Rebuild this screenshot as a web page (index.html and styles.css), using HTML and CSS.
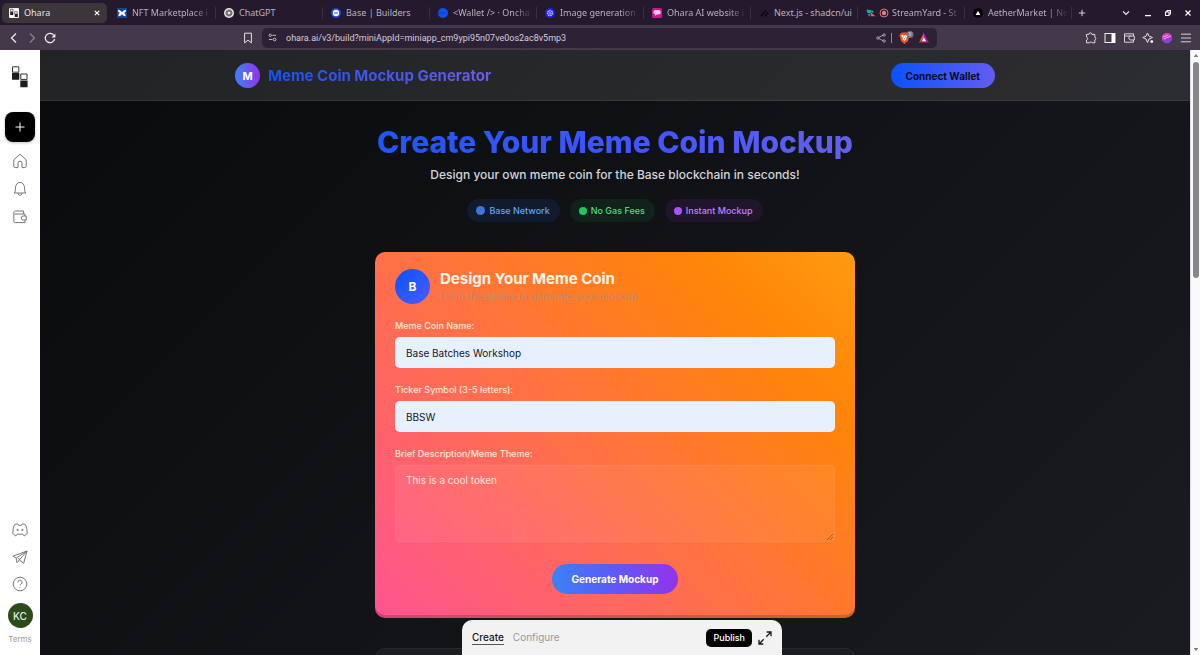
FILE: index.html
```html
<!DOCTYPE html>
<html lang="en">
<head>
<meta charset="utf-8">
<meta name="viewport" content="width=device-width, initial-scale=1">
<title>Ohara</title>
<link rel="stylesheet" href="styles.css">
</head>
<body>
<div class="browser">
  <div class="tabs">
    <div class="tab tab-active">
      <svg class="fav" viewBox="0 0 10 10"><rect width="10" height="10" rx="1" fill="#f4f4f4"/><path d="M1.2 3.8h3V7h-3zM5.8 6h3v3h-3z" fill="#222"/><path d="M1.6 1.2h2.4v2.4H1.6zM5.6 3.6h2.6V6H5.6z" fill="#fff" stroke="#333" stroke-width=".6"/></svg>
      <span class="tab-name">Ohara</span>
      <button class="tab-close" aria-label="Close tab"><svg viewBox="0 0 6 6"><path d="M.8.8l4.400 4.400M5.200.8L.8 5.200" stroke="#fff" stroke-width="1.200"/></svg></button>
    </div>
    <div class="tab tab-faded">
      <svg class="fav" viewBox="0 0 10 10"><rect width="10" height="10" fill="#124596"/><path d="M1 2c2 0 2.500.6 4 2.200C6.500 2.600 7 2 9 2c0 2-.8 2.300-2 3 1.200.7 1.700 1.600 1.500 3.200C6.800 8.200 6 7.500 5 6.200 4 7.500 3.200 8.200 1.500 8.200 1.300 6.600 1.800 5.700 3 5 1.800 4.300 1 4 1 2z" fill="#fff"/></svg>
      <span class="tab-name">NFT Marketplace i</span>
    </div>
    <div class="tab">
      <svg class="fav" viewBox="0 0 10 10"><circle cx="5" cy="5" r="5" fill="#e4e4e4"/><g fill="none" stroke="#444" stroke-width=".6"><ellipse cx="5" cy="5" rx="3.400" ry="1.900"/><ellipse cx="5" cy="5" rx="3.400" ry="1.900" transform="rotate(60 5 5)"/><ellipse cx="5" cy="5" rx="3.400" ry="1.900" transform="rotate(120 5 5)"/></g></svg>
      <span class="tab-name">ChatGPT</span>
    </div>
    <div class="tab">
      <svg class="fav" viewBox="0 0 10 10"><circle cx="5" cy="5" r="5" fill="#1248e8"/><circle cx="5" cy="5" r="3.200" fill="#fff"/><path d="M3 5h4" stroke="#1248e8" stroke-width="1"/></svg>
      <span class="tab-name">Base | Builders</span>
    </div>
    <div class="tab tab-faded">
      <svg class="fav" viewBox="0 0 10 10"><circle cx="5" cy="5" r="5" fill="#0a52f5"/><path d="M.5 5h7" stroke="#123a9c" stroke-width=".8"/></svg>
      <span class="tab-name">&lt;Wallet /&gt; · Oncha</span>
    </div>
    <div class="tab tab-faded">
      <svg class="fav" viewBox="0 0 10 10"><circle cx="5" cy="5" r="5" fill="#1f1fe0"/><circle cx="5" cy="5" r="2.400" fill="none" stroke="#b9b6ff" stroke-width="1.600" stroke-dasharray="1.400 .5"/><circle cx="5" cy="5" r=".8" fill="#fff"/></svg>
      <span class="tab-name">Image generation</span>
    </div>
    <div class="tab tab-faded">
      <svg class="fav" viewBox="0 0 10 10"><rect width="10" height="10" rx="1.500" fill="#c9168c"/><path d="M3.500 2h3a2 2 0 0 1 0 4.600H5L3 8V6.500A2.300 2.300 0 0 1 3.500 2z" fill="#ffc4ee"/></svg>
      <span class="tab-name">Ohara AI website i</span>
    </div>
    <div class="tab">
      <svg class="fav" viewBox="0 0 10 10"><path d="M2 8l5-5.500M5.500 8.500L9 4.500" stroke="#09050c" stroke-width="1.200"/></svg>
      <span class="tab-name">Next.js - shadcn/ui</span>
    </div>
    <div class="tab tab-faded">
      <svg class="fav" viewBox="0 0 10 10"><path d="M.5 1.500l4.500.8v3.200L1.500 5z" fill="#18b394"/><path d="M5 4.500l4.500 3.700H4.800z" fill="#e8623c"/><path d="M1.500 6l1.800 2.800 1.400-2.600z" fill="#3a82e8"/><path d="M5.500 1.800l2.500 2.400-2.600.2z" fill="#3fc4a7"/></svg>
      <svg class="fav fav-rec" viewBox="0 0 10 10"><circle cx="5" cy="5" r="4" fill="none" stroke="#e88080" stroke-width=".9"/><circle cx="5" cy="5" r="2.200" fill="#ee7777"/></svg>
      <span class="tab-name">StreamYard - St</span>
    </div>
    <div class="tab tab-faded">
      <svg class="fav" viewBox="0 0 10 10"><circle cx="5" cy="5" r="5" fill="#000"/><path d="M5 2.800L7.400 7H2.600z" fill="#fff"/></svg>
      <span class="tab-name">AetherMarket | Ne</span>
    </div>
    <button class="new-tab" aria-label="New tab"><svg viewBox="0 0 8 8"><path d="M4 .8v6.400M.8 4h6.400" stroke="#d8d2dc" stroke-width="1"/></svg></button>
    <div class="window-buttons">
      <button aria-label="Search tabs"><svg viewBox="0 0 8 8"><path d="M1 2.400L4 5.400l3-3" fill="none" stroke="#eee" stroke-width="1.200"/></svg></button>
      <button aria-label="Minimize"><svg viewBox="0 0 8 8"><path d="M1 6.600h6" stroke="#fff" stroke-width="1.300"/></svg></button>
      <button aria-label="Restore"><svg viewBox="0 0 8 8"><path d="M1.500 3h3.500v3.500H1.500zM3 2.800V1.500h3.500V5H5" fill="none" stroke="#fff" stroke-width="1.100"/></svg></button>
      <button aria-label="Close"><svg viewBox="0 0 8 8"><path d="M1.500 1.500l5 5M6.500 1.500l-5 5" stroke="#fff" stroke-width="1.300"/></svg></button>
    </div>
  </div>

  <div class="toolbar">
    <div class="nav-buttons">
      <button aria-label="Back"><svg viewBox="0 0 12 12"><path d="M8 1.500L3.500 6 8 10.500" fill="none" stroke="#f2eff4" stroke-width="1.200"/></svg></button>
      <button aria-label="Forward"><svg viewBox="0 0 12 12"><path d="M4 1.500L8.500 6 4 10.500" fill="none" stroke="#8d8494" stroke-width="1.200"/></svg></button>
      <button aria-label="Reload"><svg viewBox="0 0 12 12"><path d="M10 3.500A4.700 4.700 0 1 0 10.600 7" fill="none" stroke="#f2eff4" stroke-width="1.200"/><path d="M7.600 5.400h3.800V1.600z" fill="#f2eff4"/></svg></button>
    </div>
    <button class="bookmark" aria-label="Bookmark"><svg viewBox="0 0 12 12"><path d="M2.600 1.200h6.800v9.600L6 8.200l-3.400 2.600z" fill="none" stroke="#e4e0e8" stroke-width="1"/></svg></button>
    <div class="address">
      <svg class="site-info" viewBox="0 0 10 10" fill="none" stroke="#cfc9d3" stroke-width="1"><circle cx="2.500" cy="2.600" r="1.300"/><path d="M4.800 2.600H9M1 7.200h4"/><circle cx="7.300" cy="7.200" r="1.500"/></svg>
      <input class="url" type="text" aria-label="Address" value="ohara.ai/v3/build?miniAppId=miniapp_cm9ypi95n07ve0os2ac8v5mp3">
      <svg class="share" viewBox="0 0 10 10" fill="none" stroke="#bdb6c2" stroke-width=".8"><path d="M2.800 4.400l4.400-2.200M2.800 5.400l4.400 2.400"/><circle cx="1.900" cy="5" r="1.200"/><circle cx="8.100" cy="2" r="1.200"/><circle cx="8.100" cy="8" r="1.200"/></svg>
      <span class="divider"></span>
      <svg class="shield" viewBox="0 0 16 14"><path d="M2.500 2.500L4 1.500h5l1.500 1 1 2-1.500 5.500-3.500 3-3.500-3L1.500 4.500z" fill="#f0501e"/><path d="M3.800 4l2.700.6L9.200 4l.6 1-1.600 1.700.3 1.600-2 1.600-2-1.600.3-1.600L3.200 5z" fill="#fff"/><path d="M5 5.600l1 .5M8 5.600l-1 .5M6.500 7v1.500" stroke="#f0501e" stroke-width=".8"/><circle cx="12" cy="3.600" r="3.500" fill="#77717e"/><text x="12" y="5.400" text-anchor="middle" class="badge-text">8</text></svg>
      <svg class="rewards" viewBox="0 0 10 10"><path d="M5 0L2.500 4.500 0 9.500 5 6z" fill="#ff5a1f"/><path d="M5 0l5 9.500L5 6z" fill="#9b1ab0"/><path d="M0 9.500L5 6l5 3.500z" fill="#d91f6b"/><path d="M5 4.500l2.200 3.700H2.800z" fill="#fff"/></svg>
    </div>
    <div class="extensions">
      <button aria-label="Extensions"><svg viewBox="0 0 12 12"><path d="M1.400 2.400h2.400a1.500 1.500 0 0 1 3 0h3v2.800a1.400 1.400 0 0 1 0 2.700v2.900H7.200a1.400 1.400 0 0 0-2.600 0H1.500V8a1.500 1.500 0 0 0 0-2.900z" fill="none" stroke="#e4e0e8" stroke-width="1" stroke-linejoin="round"/></svg></button>
      <button aria-label="Side panel"><svg viewBox="0 0 12 12"><rect x="1" y="1.500" width="10" height="9" fill="none" stroke="#eee" stroke-width="1"/><path d="M7.500 1.500H11v9H7.500z" fill="#fff"/></svg></button>
      <button aria-label="Wallet"><svg viewBox="0 0 12 12" fill="none" stroke="#d8d2dc" stroke-width="1"><path d="M10.500 4V1.800h-9v8.400h9V8M1.500 4h9.800v4H7.800a2 2 0 0 1 0-4"/></svg></button>
      <button aria-label="Leo AI"><svg viewBox="0 0 12 12"><path d="M5.500 1L7 4.200 10.500 5.500 7 7 5.500 10.500 4 7 .8 5.500 4 4.200z" fill="none" stroke="#e4e0e8" stroke-width="1" stroke-linejoin="round"/><circle cx="9.800" cy="9.600" r="1.400" fill="#fff"/></svg></button>
      <button aria-label="Profile"><svg viewBox="0 0 12 12"><circle cx="6" cy="6" r="5.200" fill="#8a42d8"/><path d="M1 5a5.200 5.200 0 0 1 9.500-1.500L1.500 8.400A5 5 0 0 1 1 5z" fill="#e23fa8"/><path d="M1.800 5l5-1.500M3 7l7-3" stroke="#ffc3ea" stroke-width=".8"/></svg></button>
      <button aria-label="Menu"><svg viewBox="0 0 12 12"><path d="M1 2.200h10M1 6h10M1 9.800h10" stroke="#d8d2dc" stroke-width="1"/></svg></button>
    </div>
  </div>

  <div class="viewport">
    <nav class="sidebar" aria-label="Ohara">
      <a class="logo" href="#" aria-label="Ohara home"><svg viewBox="0 0 18 22"><path d="M1.500 .8h6.300v5.400H1.500zM9.800 8h6.200v5.400H9.800z" fill="#fff" stroke="#333" stroke-width="1"/><path d="M1 7h7.300v6.700H1zM9.300 14.600h7.300v6.700H9.300z" fill="#1c1c1c"/></svg></a>
      <button class="create" aria-label="New"><svg viewBox="0 0 12 12"><path d="M6 1.500v9M1.500 6h9" stroke="#fff" stroke-width="1"/></svg></button>
      <a class="side-link" href="#" aria-label="Home"><svg viewBox="0 0 16 16"><path d="M1.800 6.800L8 1.200l6.200 5.600v6.400a1.400 1.400 0 0 1-1.400 1.400H10V10.200a2 2 0 0 0-4 0v4.400H3.200a1.400 1.400 0 0 1-1.400-1.400z"/></svg></a>
      <a class="side-link" href="#" aria-label="Notifications"><svg viewBox="0 0 16 16"><path d="M2 12c1-1 1.500-2.300 1.500-5A4.500 5.300 0 0 1 8 1.400 4.500 5.300 0 0 1 12.500 7c0 2.700.5 4 1.500 5zM6 12.300a2 2 0 0 0 4 0"/></svg></a>
      <a class="side-link" href="#" aria-label="Wallet"><svg viewBox="0 0 16 16"><path d="M13 7V5H2.200M13 11v2.600H3.400A1.600 1.600 0 0 1 1.800 12V3.600A1.600 1.600 0 0 1 3.400 2h8.200v3M14.200 7v4h-3a2 2 0 0 1 0-4z"/></svg></a>
      <div class="side-bottom">
        <a href="#" aria-label="Discord"><svg viewBox="0 0 16 16"><path d="M5.800 1.900c-1.300 0-2.800.5-3.400 1.200C1.500 5 .9 8 .8 11.200c.6 1.500 2 2.400 3.200 2.700l1.200-1.700h5.600l1.200 1.700c1.200-.3 2.600-1.200 3.200-2.700-.1-3.200-.7-6.200-1.600-8.100-.6-.7-2.100-1.200-3.400-1.200l-.8 1.400H6.600z"/><circle cx="5.600" cy="8" r=".7"/><circle cx="10.400" cy="8" r=".7"/></svg></a>
        <a href="#" aria-label="Telegram"><svg viewBox="0 0 16 16"><path d="M15 2L.9 7.200l3.300 1.900.8 4.600 2.400-2.700 4.300 3.300zM15 2L4.200 9.100M15 2L7.400 11l-.8-2"/></svg></a>
        <a href="#" aria-label="Help"><svg viewBox="0 0 16 16"><circle cx="8" cy="8" r="6.800"/><path d="M5.900 6.300A2.100 2.100 0 1 1 8.800 8.200c-.6.3-.8.6-.8 1.200M8 11.200v1"/></svg></a>
      </div>
      <button class="avatar">KC</button>
      <a class="terms" href="#">Terms</a>
    </nav>

    <div class="app">
      <header class="app-header">
        <div class="header-inner">
          <div class="brand"><span class="brand-mark">M</span><span class="brand-name">Meme Coin Mockup Generator</span></div>
          <button class="connect">Connect Wallet</button>
        </div>
      </header>
      <main class="content">
        <h1 class="headline">Create Your Meme Coin Mockup</h1>
        <p class="lead">Design your own meme coin for the Base blockchain in seconds!</p>
        <div class="pills">
          <span class="pill pill-blue">Base Network</span>
          <span class="pill pill-green">No Gas Fees</span>
          <span class="pill pill-purple">Instant Mockup</span>
        </div>
        <form class="card">
          <div class="card-head">
            <span class="card-mark">B</span>
            <div>
              <h2 class="card-title">Design Your Meme Coin</h2>
              <p class="card-sub">Fill in the details to generate your mockup</p>
            </div>
          </div>
          <div class="field">
            <label for="coin">Meme Coin Name:</label>
            <input id="coin" type="text" value="Base Batches Workshop">
          </div>
          <div class="field">
            <label for="ticker">Ticker Symbol (3-5 letters):</label>
            <input id="ticker" type="text" value="BBSW">
          </div>
          <div class="field">
            <label for="theme">Brief Description/Meme Theme:</label>
            <div class="area">
              <textarea id="theme">This is a cool token</textarea>
              <svg class="grip" viewBox="0 0 6 6"><path d="M0 6l6-6M3 6l3-3" stroke="#6b4a38" stroke-width=".6"/></svg>
            </div>
          </div>
          <button class="generate" type="button">Generate Mockup</button>
        </form>
        <section class="next-card" aria-label="Preview"></section>
      </main>
      <div class="dock">
        <button class="dock-tab dock-current">Create</button>
        <button class="dock-tab">Configure</button>
        <button class="publish">Publish</button>
        <button class="expand" aria-label="Expand"><svg viewBox="0 0 14 14" fill="none" stroke="#1a1a1a" stroke-width="1.300"><path d="M8.300 5.700L12.700 1.300M8.700 1h4.300v4.300M5.700 8.300L1.300 12.700M1 8.700V13h4.300"/></svg></button>
      </div>
    </div>

    <div class="scrollbar" aria-hidden="true">
      <svg viewBox="0 0 8 6"><path d="M4 1l3 4H1z" fill="#777"/></svg>
      <span class="thumb"></span>
      <svg viewBox="0 0 8 6"><path d="M4 5L1 1h6z" fill="#777"/></svg>
    </div>
  </div>
</div>
</body>
</html>
```

FILE: styles.css
```css
* { box-sizing: border-box; }

body {
  margin: 0;
  font-family: Inter, "Liberation Sans", sans-serif;
}

button {
  padding: 0;
  border: 0;
  background: none;
  color: inherit;
  font: inherit;
}

svg { display: block; }
h1, h2, p { margin: 0; }
a { color: inherit; text-decoration: none; }

.browser {
  display: flex;
  flex-direction: column;
  height: 100vh;
  overflow: hidden;
}

/* Tab strip */
.tabs {
  display: flex;
  align-items: center;
  height: 25px;
  padding-left: 2px;
  background: #251a2d;
  color: #b9b2be;
  font: 9px/12px "Noto Sans", sans-serif;
}

.tab {
  display: flex;
  flex: 0 1 107px;
  align-items: center;
  gap: 5px;
  min-width: 0;
  height: 12px;
  padding: 0 3px 0 8px;
  border-right: 1px solid #3a3042;
}

.tab-active {
  flex-basis: 105px;
  height: 20px;
  margin-right: 2px;
  padding: 0 7px;
  border: 0;
  border-radius: 5px;
  background: #3b3639;
  color: #e6e2e8;
}

.fav { flex: none; width: 10px; height: 10px; }
.fav-rec { margin-left: -2px; margin-right: -2px; }
.tab-name { flex: 1; overflow: hidden; white-space: nowrap; }
.tab-faded .tab-name {
  -webkit-mask-image: linear-gradient(90deg, #000 75%, transparent);
  mask-image: linear-gradient(90deg, #000 75%, transparent);
}
.tab-close svg { width: 6px; height: 6px; }
.new-tab { margin-left: 6px; }
.new-tab svg { width: 8px; height: 8px; }

.window-buttons {
  display: flex;
  gap: 12px;
  margin-left: auto;
  padding-right: 8px;
}
.window-buttons svg { width: 8px; height: 8px; }
.window-buttons button:first-child { margin-right: 2px; }

/* Toolbar */
.toolbar {
  display: flex;
  align-items: center;
  height: 25px;
  padding: 0 8px;
  background: #44394b;
}
.toolbar button svg { width: 12px; height: 12px; }
.nav-buttons { display: flex; flex: 0 1 234px; gap: 6px; }
.bookmark { margin-right: 8px; }

.address {
  display: flex;
  flex: 0 1 675px;
  align-items: center;
  height: 20px;
  padding: 0 8px 0 6px;
  border-radius: 5px;
  background: #2d2235;
}
.site-info { width: 9px; height: 9px; }
.url {
  flex: 1;
  min-width: 0;
  padding: 0 9px;
  border: 0;
  background: none;
  color: #d3cdd7;
  font: 9px/12px Roboto, sans-serif;
}
.share { width: 10px; height: 10px; }
.divider { width: 1px; height: 10px; margin: 0 6px 0 5px; background: #8d8494; }
.shield { width: 16px; height: 14px; }
.badge-text { fill: #ddd; font: 5px "Noto Sans", sans-serif; }
.rewards { width: 10px; height: 10px; margin-left: 5px; }
.extensions { display: flex; gap: 7px; margin-left: auto; }

/* Page area */
.viewport { display: flex; flex: 1; min-height: 0; }

.sidebar {
  display: flex;
  flex: none;
  flex-direction: column;
  align-items: center;
  width: 40px;
  padding: 16px 0 10px;
  background: #fff;
}
.logo svg { width: 18px; height: 22px; }
.create {
  display: grid;
  place-items: center;
  width: 30px;
  height: 30px;
  margin: 24px 0 11px;
  border-radius: 8px;
  background: #000;
  box-shadow: 0 1px 3px rgba(0, 0, 0, .25);
}
.create svg { width: 12px; height: 12px; }
.side-link { margin-bottom: 12px; }
.side-link svg, .side-bottom svg {
  width: 16px;
  height: 16px;
  fill: none;
  stroke: #777;
  stroke-width: 1;
  stroke-linejoin: round;
}
.side-bottom {
  display: flex;
  flex-direction: column;
  gap: 11px;
  margin: auto 0 11px;
}
.avatar {
  width: 25px;
  height: 25px;
  border-radius: 50%;
  background: #2c4a1c;
  color: #e8f0e0;
  font-size: 10px;
  font-weight: 500;
}
.terms {
  margin-top: 5px;
  color: #999;
  font-size: 8px;
  line-height: 12px;
}

.app {
  position: relative;
  flex: 1;
  overflow: hidden;
  background: linear-gradient(135deg, #0a0b0d, #1a1b1f);
}

.app-header {
  border-bottom: 1px solid rgba(255, 255, 255, .08);
  background: rgba(255, 255, 255, .1);
}
.header-inner {
  display: flex;
  align-items: center;
  justify-content: space-between;
  max-width: 760px;
  margin: 0 auto;
  padding: 13px 0 12px;
}
.brand { display: flex; align-items: center; gap: 8px; }
.brand-mark {
  display: grid;
  place-items: center;
  width: 25px;
  height: 25px;
  border-radius: 50%;
  background: linear-gradient(90deg, #3b82f6, #9333ea);
  color: #fff;
  font-size: 11px;
  font-weight: 700;
}
.brand-name, .headline {
  background: linear-gradient(90deg, #1652f0, #6c5ce7);
  -webkit-background-clip: text;
  background-clip: text;
  color: transparent;
}
.brand-name {
  font-size: 15px;
  font-weight: 700;
  line-height: 20px;
}
.connect {
  height: 25px;
  padding: 0 15px;
  border-radius: 13px;
  background: linear-gradient(90deg, #0a52ff, #625df0);
  color: #0a0b1d;
  font-size: 10px;
  font-weight: 700;
}

.content {
  display: flex;
  flex-direction: column;
  align-items: center;
  max-width: 480px;
  margin: 0 auto;
  padding-top: 22px;
}
.headline {
  background-image: linear-gradient(90deg, #1f57f5, #4455ff 60%, #6461e8);
  font-size: 30px;
  font-weight: 800;
  line-height: 38px;
  white-space: nowrap;
}
.lead {
  margin-top: 4px;
  color: #d1d5db;
  font-size: 12px;
  font-weight: 500;
  line-height: 20px;
}
.pills { display: flex; gap: 10px; margin: 14px 0 30px; }
.pill {
  display: flex;
  align-items: center;
  gap: 4px;
  height: 23px;
  padding: 0 10px 0 9px;
  border-radius: 12px;
  font-size: 9px;
  font-weight: 500;
}
.pill::before {
  width: 8px;
  height: 8px;
  border-radius: 50%;
  background: currentColor;
  content: "";
}
.pill-blue { background: #111b2d; color: #60a5fa; }
.pill-blue::before { width: 9px; height: 9px; background: #3b76d8; }
.pill-green { background: #10221b; color: #4ade80; }
.pill-green::before { background: #22c55e; }
.pill-purple { background: #20162b; color: #c084fc; }
.pill-purple::before { background: #a855f7; }

.card {
  display: flex;
  flex-direction: column;
  width: 100%;
  padding: 17px 20px 24px;
  border-radius: 10px;
  background: linear-gradient(45deg, #ff5391, #ff6b57 35%, #ff7a28 60%, #ff8508 80%, #ff9a12);
  box-shadow: inset 0 -3px 0 rgba(0, 0, 0, .18);
}
.card-head { display: flex; align-items: center; gap: 10px; margin-bottom: 16px; }
.card-mark {
  display: grid;
  place-items: center;
  width: 35px;
  height: 35px;
  border-radius: 50%;
  background: linear-gradient(135deg, #0a52ff, #4a5cff);
  color: #fff;
  font-size: 12px;
  font-weight: 700;
}
.card-title {
  color: #fff4e8;
  font-size: 15px;
  font-weight: 700;
  line-height: 19px;
}
.card-sub { color: #bb8b72; font-size: 10px; line-height: 16px; }

.field {
  display: flex;
  flex-direction: column;
  gap: 5px;
  margin-bottom: 16px;
}
.field label {
  color: #ffe9dc;
  font-size: 9px;
  font-weight: 500;
  line-height: 12px;
}
.field input, .field textarea {
  display: block;
  width: 100%;
  border: 1px solid rgba(255, 255, 255, .06);
  border-radius: 5px;
  outline: 0;
  font: 10px/16px Inter, sans-serif;
}
.field input {
  height: 31px;
  padding: 0 10px;
  background: #e8f0fe;
  color: #111827;
}
.area { position: relative; }
.field textarea {
  height: 77px;
  padding: 6px 10px;
  background: rgba(255, 255, 255, .06);
  color: #ffe9dc;
  resize: none;
}
.grip { position: absolute; right: 2px; bottom: 2px; width: 6px; height: 6px; }

.generate {
  align-self: center;
  height: 30px;
  margin-top: 6px;
  padding: 0 20px;
  border-radius: 15px;
  background: linear-gradient(90deg, #3b82f6, #5b5cf6 45%, #9333ea);
  color: #fff;
  font-size: 10px;
  font-weight: 700;
}

.next-card {
  width: 100%;
  height: 120px;
  margin-top: 30px;
  border: 1px solid #2a2b2f;
  border-radius: 10px;
  background: #1c1d20;
}

/* Bottom dock floats over the app preview */
.dock {
  position: absolute;
  bottom: 0;
  left: 50%;
  display: flex;
  align-items: center;
  gap: 9px;
  width: 320px;
  height: 35px;
  margin-left: -153px;
  padding: 0 10px;
  border-radius: 10px 10px 0 0;
  background: #f2f2f2;
  font-size: 10px;
  line-height: 13px;
}
.dock-tab { color: #999; }
.dock-current { border-bottom: 1px solid #555; color: #15151f; font-weight: 500; }
.publish {
  height: 18px;
  margin-left: auto;
  padding: 0 7px;
  border-radius: 5px;
  background: #000;
  color: #fff;
  font-size: 9px;
  font-weight: 500;
}
.expand { margin-left: -3px; }
.expand svg { width: 14px; height: 14px; }

.scrollbar {
  display: flex;
  flex: none;
  flex-direction: column;
  align-items: center;
  width: 10px;
  padding: 3px 0;
  border-left: 1px solid #ddd;
  background: #fafafa;
}
.scrollbar svg { width: 6px; height: 5px; }
.thumb {
  width: 6px;
  height: 36%;
  margin: 4px 0 auto;
  border-radius: 3px;
  background: #878787;
}
```
